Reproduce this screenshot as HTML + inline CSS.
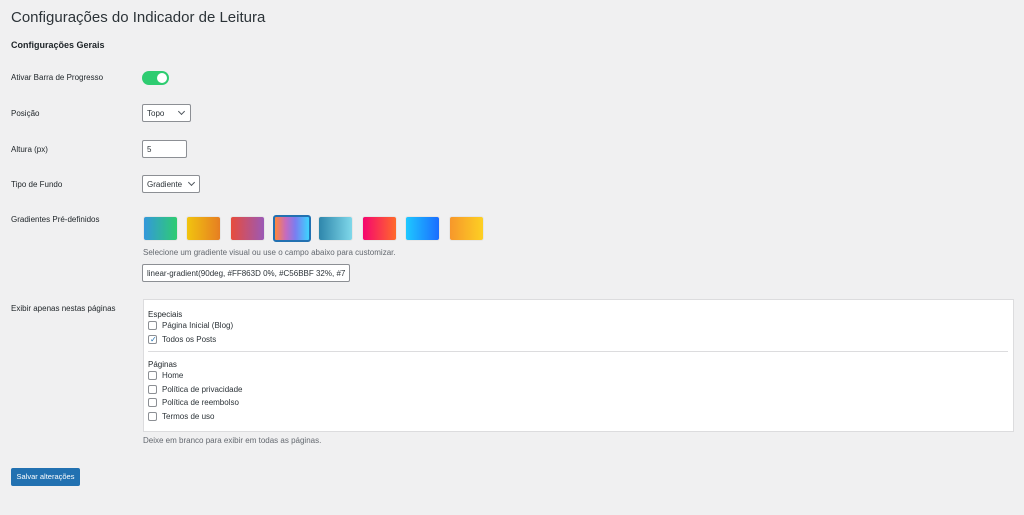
<!DOCTYPE html>
<html><head><meta charset="utf-8"><style>
body{margin:0;width:1024px;height:515px;background:#f0f0f1;font-family:"Liberation Sans",sans-serif;color:#1d2327;position:relative;overflow:hidden}
.a{position:absolute;white-space:nowrap}
.l{font-size:8px;left:11px}
.in{position:absolute;background:#fff;border:1px solid #8c8f94;border-radius:2px;font-size:8px;box-sizing:border-box;padding-left:4px;line-height:17px;color:#2c3338}
.sw{position:absolute;top:216px;width:35px;height:25px;border-radius:3px;border:1px solid #e6e6e6;box-sizing:border-box}
.cb{position:absolute;left:148px;width:9px;height:9px;border:1px solid #8c8f94;border-radius:2px;background:#fff;box-sizing:border-box}
.ct{position:absolute;left:162px;font-size:8px;color:#2c3338}
.chev{position:absolute;width:4px;height:4px;border-right:1px solid #50575e;border-bottom:1px solid #50575e;transform:rotate(45deg)}
</style></head><body>
<div class="a" style="left:11px;top:9px;font-size:15px;color:#2c3338">Configurações do Indicador de Leitura</div>
<div class="a" style="left:11px;top:40px;font-size:9px;font-weight:bold">Configurações Gerais</div>
<div class="a l" style="top:73px">Ativar Barra de Progresso</div>
<div class="a" style="left:142px;top:71px;width:27px;height:14px;border-radius:7px;background:#2ecc71"></div>
<div class="a" style="left:157px;top:73px;width:10px;height:10px;border-radius:5px;background:#fff"></div>
<div class="a l" style="top:109px">Posição</div>
<div class="in" style="left:142px;top:104px;width:49px;height:18px">Topo</div><div class="chev" style="left:179px;top:109px"></div>
<div class="a l" style="top:145px">Altura (px)</div>
<div class="in" style="left:142px;top:140px;width:45px;height:18px">5</div>
<div class="a l" style="top:180px">Tipo de Fundo</div>
<div class="in" style="left:142px;top:175px;width:58px;height:18px">Gradiente</div><div class="chev" style="left:189px;top:180px"></div>
<div class="a l" style="top:215px">Gradientes Pré-definidos</div>
<div class="sw" style="left:143px;background:linear-gradient(90deg,#3498db,#2ecc71)"></div>
<div class="sw" style="left:186px;background:linear-gradient(90deg,#f1c40f,#e67e22)"></div>
<div class="sw" style="left:230px;background:linear-gradient(90deg,#e74c3c,#9b59b6)"></div>
<div class="sw" style="left:273px;width:38px;height:27px;top:215px;border:2px solid #2271b1;background:linear-gradient(90deg,#FF863D,#C56BBF 32%,#7a7ef0 60%,#3dd4ff)"></div>
<div class="sw" style="left:318px;background:linear-gradient(90deg,#2e86ab,#7fd8ea)"></div>
<div class="sw" style="left:362px;background:linear-gradient(90deg,#f5066f,#ff6a2b)"></div>
<div class="sw" style="left:405px;background:linear-gradient(90deg,#1fc8ff,#1a6dff)"></div>
<div class="sw" style="left:449px;background:linear-gradient(90deg,#f7972b,#fdd023)"></div>
<div class="a" style="left:143px;top:248px;font-size:8px;color:#646970">Selecione um gradiente visual ou use o campo abaixo para customizar.</div>
<div class="in" style="left:142px;top:264px;width:208px;height:18px;overflow:hidden">linear-gradient(90deg, #FF863D 0%, #C56BBF 32%, #7</div>
<div class="a l" style="top:304px">Exibir apenas nestas páginas</div>
<div class="a" style="left:143px;top:299px;width:871px;height:133px;background:#fff;border:1px solid #dcdcde;box-sizing:border-box"></div>
<div class="a" style="left:148px;top:310px;font-size:8px">Especiais</div>
<div class="cb" style="top:321px"></div><div class="ct" style="top:321px">Página Inicial (Blog)</div>
<div class="cb" style="top:335px"></div><div class="a" style="left:150px;top:335px;font-size:8px;color:#2271b1">✓</div><div class="ct" style="top:335px">Todos os Posts</div>
<div class="a" style="left:148px;top:351px;width:860px;height:1px;background:#dcdcde"></div>
<div class="a" style="left:148px;top:360px;font-size:8px">Páginas</div>
<div class="cb" style="top:371px"></div><div class="ct" style="top:371px">Home</div>
<div class="cb" style="top:385px"></div><div class="ct" style="top:385px">Política de privacidade</div>
<div class="cb" style="top:398px"></div><div class="ct" style="top:398px">Política de reembolso</div>
<div class="cb" style="top:412px"></div><div class="ct" style="top:412px">Termos de uso</div>
<div class="a" style="left:143px;top:436px;font-size:8px;color:#646970">Deixe em branco para exibir em todas as páginas.</div>
<div class="a" style="left:11px;top:468px;width:69px;height:18px;background:#2271b1;border-radius:2px;color:#fff;font-size:7.5px;line-height:18px;text-align:center">Salvar alterações</div>
</body></html>
